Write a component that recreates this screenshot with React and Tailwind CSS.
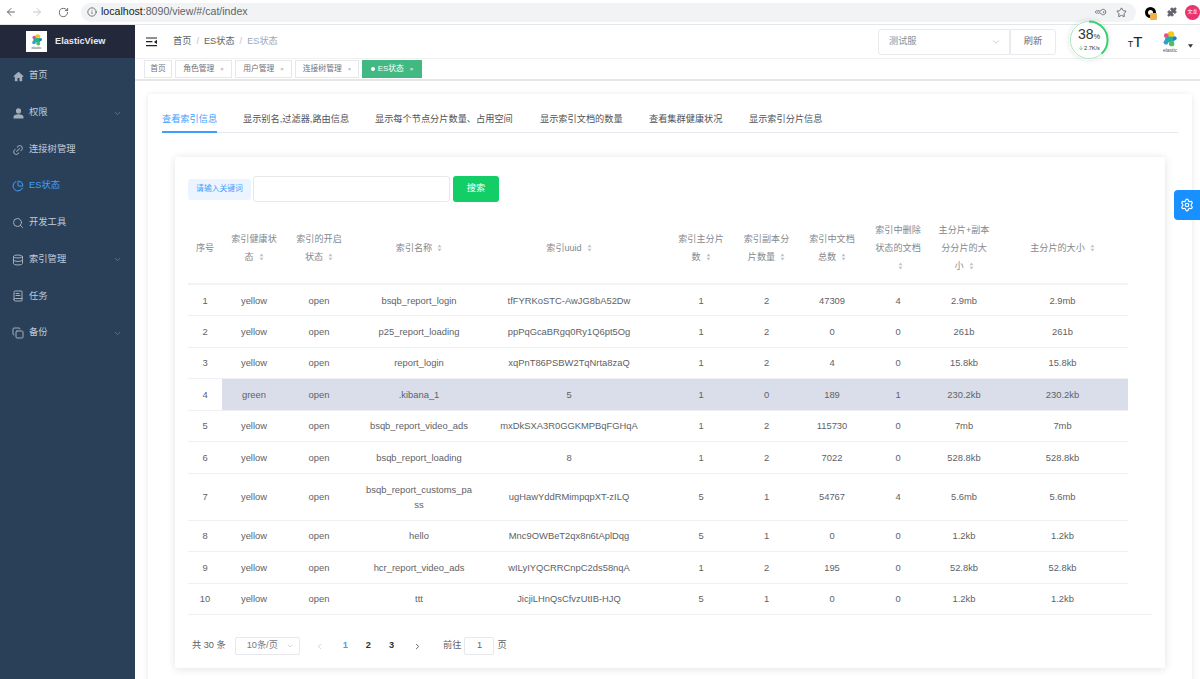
import { ArrowLeft, ArrowRight, RotateCw, Info, KeyRound, Star, Puzzle, Link2, ChartPie, Search, Database, BookText, Copy, ChevronDown, ChevronLeft, ChevronRight, Settings, ArrowDown } from 'lucide-react'

const font = { }

function HomeIcon() {
  return (
    <svg viewBox="0 0 12 12" className="w-[11px] h-[11px] text-[#a3aeb9]" fill="currentColor">
      <path d="M6 .8 .4 5.6l.9 1 .7-.6V11.2h2.9V7.6h2.2v3.6H10V6l.7.6.9-1z" />
    </svg>
  )
}

function UserIcon() {
  return (
    <svg viewBox="0 0 12 12" className="w-[11px] h-[11px] text-[#a3aeb9]" fill="currentColor">
      <circle cx="6" cy="3.2" r="2.8" />
      <path d="M.6 11.4V9.6c0-1.8 2.4-2.8 5.4-2.8s5.4 1 5.4 2.8v1.8z" />
    </svg>
  )
}

function ElasticLogo({ className }) {
  return (
    <svg viewBox="0 0 24 24" className={className}>
      <circle cx="13.5" cy="5.5" r="5" fill="#f4c81f" />
      <circle cx="6.5" cy="7" r="3.6" fill="#ea4f8c" />
      <ellipse cx="12" cy="12.5" rx="7.5" ry="4.4" fill="#19b3a6" />
      <circle cx="6" cy="17" r="3.6" fill="#3b9ad9" />
      <circle cx="14.5" cy="19" r="4" fill="#5cb85c" />
      <circle cx="19" cy="11" r="3" fill="#1c7fc0" />
    </svg>
  )
}

function SortCaret() {
  return (
    <svg viewBox="0 0 6 10" className="inline-block w-[5px] h-[8px] ml-[5px] align-[-1px] text-[#c0c4cc]" fill="currentColor">
      <path d="M3 .5 5.5 4h-5zM3 9.5.5 6h5z" />
    </svg>
  )
}

const menu = [
  { name: '首页', icon: <HomeIcon /> },
  { name: '权限', icon: <UserIcon />, sub: true },
  { name: '连接树管理', icon: <Link2 size={12} className="text-[#8f9cab] -rotate-45" /> },
  { name: 'ES状态', icon: <ChartPie size={12} className="text-[#409eff]" />, active: true },
  { name: '开发工具', icon: <Search size={12} className="text-[#a3aeb9]" /> },
  { name: '索引管理', icon: <Database size={12} className="text-[#a3aeb9]" />, sub: true },
  { name: '任务', icon: <BookText size={12} className="text-[#a3aeb9]" /> },
  { name: '备份', icon: <Copy size={12} className="text-[#a3aeb9]" />, sub: true },
]

const tags = [
  { name: '首页', w: 'w-[28px]' },
  { name: '角色管理', w: 'w-[57px]', close: true },
  { name: '用户管理', w: 'w-[57px]', close: true },
  { name: '连接树管理', w: 'w-[64px]', close: true },
]

const tabs = [
  { name: '查看索引信息', w: 'w-[81px]', active: true },
  { name: '显示别名,过滤器,路由信息', w: 'w-[132px]' },
  { name: '显示每个节点分片数量、占用空间', w: 'w-[165px]' },
  { name: '显示索引文档的数量', w: 'w-[109px]' },
  { name: '查看集群健康状况', w: 'w-[100px]' },
  { name: '显示索引分片信息', w: 'w-[80px]' },
]

const columns = [
  { w: 'w-[34px]', lines: ['序号'], noSort: true },
  { w: 'w-[64px]', lines: ['索引健康状', '态'] },
  { w: 'w-[66px]', lines: ['索引的开启', '状态'] },
  { w: 'w-[134px]', lines: ['索引名称'] },
  { w: 'w-[166px]', lines: ['索引uuid'] },
  { w: 'w-[82px]', lines: ['索引主分片', '数'], pad: true },
  { w: 'w-[65px]', lines: ['索引副本分', '片数量'] },
  { w: 'w-[66px]', lines: ['索引中文档', '总数'] },
  { w: 'w-[66px]', lines: ['索引中删除', '状态的文档', ''] },
  { w: 'w-[66px]', lines: ['主分片+副本', '分分片的大', '小'] },
  { w: 'w-[131px]', lines: ['主分片的大小'] },
]

const rows = [
  ['1', 'yellow', 'open', 'bsqb_report_login', 'tfFYRKoSTC-AwJG8bA52Dw', '1', '2', '47309', '4', '2.9mb', '2.9mb'],
  ['2', 'yellow', 'open', 'p25_report_loading', 'ppPqGcaBRgq0Ry1Q6pt5Og', '1', '2', '0', '0', '261b', '261b'],
  ['3', 'yellow', 'open', 'report_login', 'xqPnT86PSBW2TqNrta8zaQ', '1', '2', '4', '0', '15.8kb', '15.8kb'],
  ['4', 'green', 'open', '.kibana_1', '5', '1', '0', '189', '1', '230.2kb', '230.2kb'],
  ['5', 'yellow', 'open', 'bsqb_report_video_ads', 'mxDkSXA3R0GGKMPBqFGHqA', '1', '2', '115730', '0', '7mb', '7mb'],
  ['6', 'yellow', 'open', 'bsqb_report_loading', '8', '1', '2', '7022', '0', '528.8kb', '528.8kb'],
  ['7', 'yellow', 'open', 'bsqb_report_customs_pa ss', 'ugHawYddRMimpqpXT-zILQ', '5', '1', '54767', '4', '5.6mb', '5.6mb'],
  ['8', 'yellow', 'open', 'hello', 'Mnc9OWBeT2qx8n6tAplDqg', '5', '1', '0', '0', '1.2kb', '1.2kb'],
  ['9', 'yellow', 'open', 'hcr_report_video_ads', 'wILyIYQCRRCnpC2ds58nqA', '1', '2', '195', '0', '52.8kb', '52.8kb'],
  ['10', 'yellow', 'open', 'ttt', 'JicjiLHnQsCfvzUtIB-HJQ', '5', '1', '0', '0', '1.2kb', '1.2kb'],
]

function BrowserBar() {
  return (
    <div className="h-[25px] bg-white flex items-center border-b border-[#e4e6e8] shrink-0">
      <ArrowLeft size={12} className="ml-[5px] text-[#5f6368]" />
      <ArrowRight size={12} className="ml-[14px] text-[#c4c7ca]" />
      <RotateCw size={11} className="ml-[15px] text-[#5f6368]" />
      <div className="ml-[12px] w-[1057px] h-[19px] bg-[#f1f3f4] rounded-full flex items-center pl-[6px] pr-[9px]">
        <Info size={10} className="text-[#5f6368]" />
        <span className="ml-[4px] text-[10.6px] text-[#5f6368]"><span className="text-[#202124]">localhost</span>:8090/view/#/cat/index</span>
        <KeyRound size={10} className="ml-auto text-[#5f6368] rotate-45" />
        <Star size={11} className="ml-[10px] text-[#5f6368]" />
      </div>
      <div className="relative ml-[9px] w-[11px] h-[11px] rounded-full border-[3px] border-black">
        <span className="absolute -right-[4px] -bottom-[5px] w-[7px] h-[7px] bg-[#f0b04a] rounded-[1px]" />
      </div>
      <Puzzle size={10} fill="#5f6368" className="ml-[11px] text-[#5f6368]" />
      <div className="ml-[8px] w-[15px] h-[15px] rounded-full bg-[#e8336f] text-white text-[5px] flex items-center justify-center">文龙</div>
    </div>
  )
}

function Sidebar() {
  return (
    <div className="w-[135px] shrink-0 bg-[#2a4059]">
      <div className="h-[33px] bg-[#23293a] flex items-center pl-[26px]">
        <div className="w-[21px] h-[21px] bg-white flex flex-col items-center justify-center">
          <ElasticLogo className="w-[12px] h-[12px]" />
          <span className="text-[3.5px] leading-[4px] text-[#444]">elastic</span>
        </div>
        <span className="ml-[8px] text-[9.2px] font-bold text-[#e6e9ee]">ElasticView</span>
      </div>
      {menu.map((m) => (
        <div key={m.name} className="h-[36.7px] flex items-center pl-[12px] pr-[13px]">
          <span className="w-[12px] flex justify-center">{m.icon}</span>
          <span className={`ml-[5px] text-[9.3px] ${m.active ? 'text-[#409eff]' : 'text-[#bfcbd9]'}`}>{m.name}</span>
          {m.sub && <ChevronDown size={9} className="ml-auto text-[#6f8093]" />}
        </div>
      ))}
    </div>
  )
}

function Navbar() {
  return (
    <div className="h-[33px] bg-white flex items-center pl-[11px] shrink-0">
      <svg viewBox="0 0 12 10" className="w-[11px] h-[10px]" fill="#222">
        <path d="M0 0h12v1.3H0zM0 4h7v1.3H0zM0 8.4h12v1.3H0zM12 2.6v4.6L8.6 4.9z" />
      </svg>
      <div className="ml-[16px] flex items-center text-[9.2px] text-[#606266]">
        <span>首页</span>
        <span className="mx-[5px] text-[#c0c4cc]">/</span>
        <span>ES状态</span>
        <span className="mx-[5px] text-[#c0c4cc]">/</span>
        <span className="text-[#97a8be]">ES状态</span>
      </div>
      <div className="ml-auto flex items-center">
        <div className="w-[132px] h-[26px] border border-[#e8eaee] rounded-l-[3px] flex items-center pl-[10px] pr-[8px] text-[9.2px] text-[#8c8f96]">
          测试服
          <ChevronDown size={10} className="ml-auto text-[#c0c4cc]" />
        </div>
        <div className="w-[46px] h-[26px] border border-[#e8eaee] rounded-r-[3px] flex items-center justify-center text-[9.2px] text-[#6a6d73]">刷新</div>
        <div className="ml-[13px] -mt-[4px] relative w-[40px] h-[40px] rounded-full shadow-[0_0_5px_rgba(0,0,0,0.12)]">
          <svg viewBox="0 0 40 40" className="absolute inset-0 w-full h-full">
            <circle cx="20" cy="20" r="18.6" fill="white" stroke="#a8e6bf" strokeWidth="1" />
            <circle cx="20" cy="20" r="18.6" fill="none" stroke="#35d06f" strokeWidth="2" strokeDasharray="44.4 117" transform="rotate(-90 20 20)" />
          </svg>
          <div className="absolute inset-0 flex flex-col items-center justify-center">
            <span className="text-[14px] leading-[15px] text-[#333]">38<span className="text-[7.5px]">%</span></span>
            <span className="flex items-center text-[5.6px] leading-[8px] text-[#333]">
              <ArrowDown size={6} className="text-[#22b45a]" />
              2.7K/s
            </span>
          </div>
        </div>
        <div className="ml-[18px] w-[16px] flex items-end justify-center text-[#222] leading-none">
          <span className="text-[9px]">T</span>
          <span className="text-[15px]">T</span>
        </div>
        <div className="ml-[15px] w-[24px] flex flex-col items-center">
          <ElasticLogo className="w-[16px] h-[16px]" />
          <span className="text-[5px] leading-[6px] text-[#555]">elastic</span>
        </div>
        <svg viewBox="0 0 6 4" className="ml-[6px] mr-[7px] mt-[9px] w-[5px] h-[4px]" fill="#333">
          <path d="M0 0h6L3 4z" />
        </svg>
      </div>
    </div>
  )
}

function TagsBar() {
  return (
    <div className="h-[23px] bg-white border-y border-t-[#eef0f2] border-b-[#e6e6e6] border-b-2 flex items-center pl-[9px] gap-[3px] shrink-0">
      {tags.map((t) => (
        <div key={t.name} className={`${t.w} h-[18px] border border-[#e6e8eb] flex items-center justify-center text-[7.8px] text-[#6f7277]`}>
          {t.name}
          {t.close && <span className="ml-[6px] text-[6px] text-[#9a9da3]">×</span>}
        </div>
      ))}
      <div className="w-[60px] h-[18px] bg-[#42b983] flex items-center justify-center text-[7.8px] text-white">
        <span className="w-[4px] h-[4px] bg-white rounded-full mr-[3px]" />
        ES状态
        <span className="ml-[6px] text-[6px]">×</span>
      </div>
    </div>
  )
}

function DataTable() {
  return (
    <table className="table-fixed border-collapse w-[940px] mt-[11px]">
      <colgroup>
        {columns.map((c, i) => <col key={i} className={c.w} />)}
      </colgroup>
      <thead>
        <tr className="h-[71px] border-b-2 border-[#f1f3f6]">
          {columns.map((c, i) => (
            <th key={i} className={`p-0 text-center font-normal text-[9.1px] leading-[19px] text-[#85888e] ${c.pad ? 'pl-[16px]' : ''}`}>
              {c.lines.map((l, j) => (
                <div key={j} className="leading-[16px] py-[1px]">
                  {l}
                  {j === c.lines.length - 1 && !c.noSort && <SortCaret />}
                </div>
              ))}
            </th>
          ))}
        </tr>
      </thead>
      <tbody>
        {rows.map((r, i) => (
          <tr key={r[0]} className={`border-b border-[#eef0f4] ${r[0] === '7' ? 'h-[47px]' : 'h-[31.5px]'}`}>
            {r.map((v, j) => (
              <td
                key={j}
                className={`p-0 text-center text-[9.4px] leading-[15px] text-[#606266] ${i === 3 && j > 0 ? 'bg-[#d9deea]' : ''} ${j === 5 ? 'pl-[16px]' : ''} ${j === 3 && r[0] === '7' ? 'px-[13px] break-all' : ''}`}
              >
                {v}
              </td>
            ))}
          </tr>
        ))}
      </tbody>
    </table>
  )
}

function Pagination() {
  return (
    <div className="mt-[22px] flex items-center text-[9.2px] text-[#606266]">
      <span className="ml-[4px]">共 30 条</span>
      <div className="ml-[9px] w-[65px] h-[18px] border border-[#e6e8eb] rounded-[2px] flex items-center pl-[11px] pr-[5px] text-[#76797f]">
        10条/页
        <ChevronDown size={8} className="ml-auto text-[#c0c4cc]" />
      </div>
      <ChevronLeft size={9} className="ml-[15px] text-[#c0c4cc]" />
      <span className="ml-[19px] font-bold text-[#409eff]">1</span>
      <span className="ml-[18px] font-bold text-[#303133]">2</span>
      <span className="ml-[18px] font-bold text-[#303133]">3</span>
      <ChevronRight size={9} className="ml-[19px] text-[#303133]" />
      <span className="ml-[21px]">前往</span>
      <div className="ml-[3px] w-[30px] h-[18px] border border-[#e6e8eb] rounded-[2px] flex items-center justify-center">1</div>
      <span className="ml-[3px]">页</span>
    </div>
  )
}

function Content() {
  return (
    <div className="flex-1 min-h-0 bg-white pl-[13px] pt-[13px] overflow-hidden">
      <div className="w-[1044px] h-[640px] rounded-[3px] bg-white shadow-[0_1px_6px_rgba(0,0,0,0.1)] pt-[13px] pl-[14px]">
        <div className="w-[1016px] h-[26px] border-b border-[#e4e7ed] flex">
          {tabs.map((t) => (
            <div key={t.name} className={`${t.w} shrink-0 text-[9.2px] leading-[25px] ${t.active ? 'text-[#409eff]' : 'text-[#505358]'}`}>
              <span className={`inline-block h-[26px] ${t.active ? 'border-b-2 border-[#409eff]' : ''}`}>{t.name}</span>
            </div>
          ))}
        </div>
        <div className="ml-[13px] mt-[24px] w-[990px] h-[511px] bg-white rounded-[2px] shadow-[0_1px_8px_rgba(0,0,0,0.12)] pt-[19px] pl-[13px]">
          <div className="flex items-center">
            <div className="w-[63px] h-[21px] bg-[#ecf5ff] rounded-[3px] flex items-center justify-center text-[7.8px] text-[#409eff]">请输入关键词</div>
            <div className="ml-[2px] w-[197px] h-[26px] border border-[#e6e8eb] rounded-[3px]" />
            <div className="ml-[3px] w-[46px] h-[26px] bg-[#13ce66] rounded-[3px] flex items-center justify-center text-[9.2px] text-white">搜索</div>
          </div>
          <DataTable />
          <div className="w-[964px] border-b border-[#eef0f4] -mt-px" />
          <Pagination />
        </div>
      </div>
    </div>
  )
}

export default function App() {
  return (
    <div className="relative w-[1200px] h-[679px] overflow-hidden flex flex-col bg-white font-['Liberation_Sans','Noto_Sans_CJK_SC',sans-serif]" style={font}>
      <BrowserBar />
      <div className="flex flex-1 min-h-0">
        <Sidebar />
        <div className="flex-1 min-w-0 flex flex-col">
          <Navbar />
          <TagsBar />
          <Content />
        </div>
      </div>
      <div className="absolute right-0 top-[190px] w-[26px] h-[30px] bg-[#1890ff] rounded-l-[4px] flex items-center justify-center">
        <Settings size={14} className="text-white" />
      </div>
    </div>
  )
}
